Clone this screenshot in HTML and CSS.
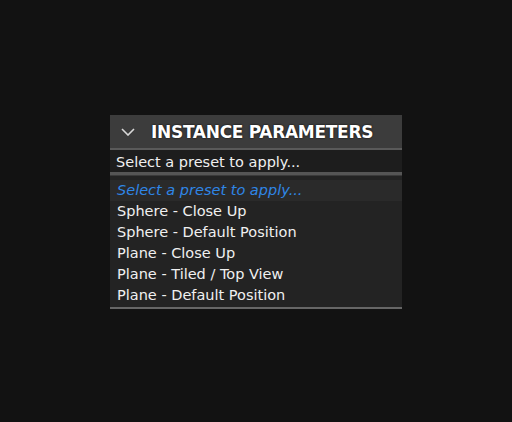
FILE: index.html
```html
<!DOCTYPE html>
<html>
<head>
<meta charset="utf-8">
<link rel="stylesheet" href="styles.css">
</head>
<body>
<div class="panel">
  <div class="header">
    <svg class="chev" width="14" height="8" viewBox="0 0 14 8"><path d="M1 1 L7 7 L13 1" fill="none" stroke="#d8d8d8" stroke-width="1.6"/></svg>
    <span class="title">INSTANCE PARAMETERS</span>
  </div>
  <div class="select">Select a preset to apply...</div>
  <div class="list">
    <div class="item placeholder">Select a preset to apply...</div>
    <div class="item">Sphere - Close Up</div>
    <div class="item">Sphere - Default Position</div>
    <div class="item">Plane - Close Up</div>
    <div class="item">Plane - Tiled / Top View</div>
    <div class="item">Plane - Default Position</div>
  </div>
</div>
</body>
</html>
```
FILE: styles.css
```css
html, body {
  margin: 0;
  padding: 0;
  background: #121212;
  width: 512px;
  height: 422px;
  overflow: hidden;
}
.panel {
  margin: 115px 0 0 110px;
  width: 292px;
  font-family: "DejaVu Sans", "Liberation Sans", Arial, sans-serif;
}
.header {
  height: 33px;
  background: #3c3c3c;
  display: flex;
  align-items: center;
  padding-left: 11px;
  gap: 16px;
}
.chev {
  display: block;
}
.title {
  color: #ffffff;
  font-weight: bold;
  font-size: 17px;
  letter-spacing: -0.3px;
  text-shadow: 0 0 2px #000;
}
.select {
  border-top: 2px solid #5a5a5a;
  background: #1d1d1d;
  height: 21px;
  padding-top: 1px;
  line-height: 22px;
  padding-left: 6px;
  color: #f0f0f0;
  font-size: 14.5px;
  border-bottom: 3px solid #555;
}
.list {
  background: #232323;
  padding: 4px 0 1px;
  border-bottom: 2px solid #666;
  border-top: 1px solid #3a3a3a;
}
.item {
  height: 21px;
  line-height: 21px;
  padding-left: 7px;
  color: #f0f0f0;
  font-size: 14.5px;
}
.placeholder {
  color: #2f86e6;
  font-style: italic;
  background: #2a2a2a;
}
```
